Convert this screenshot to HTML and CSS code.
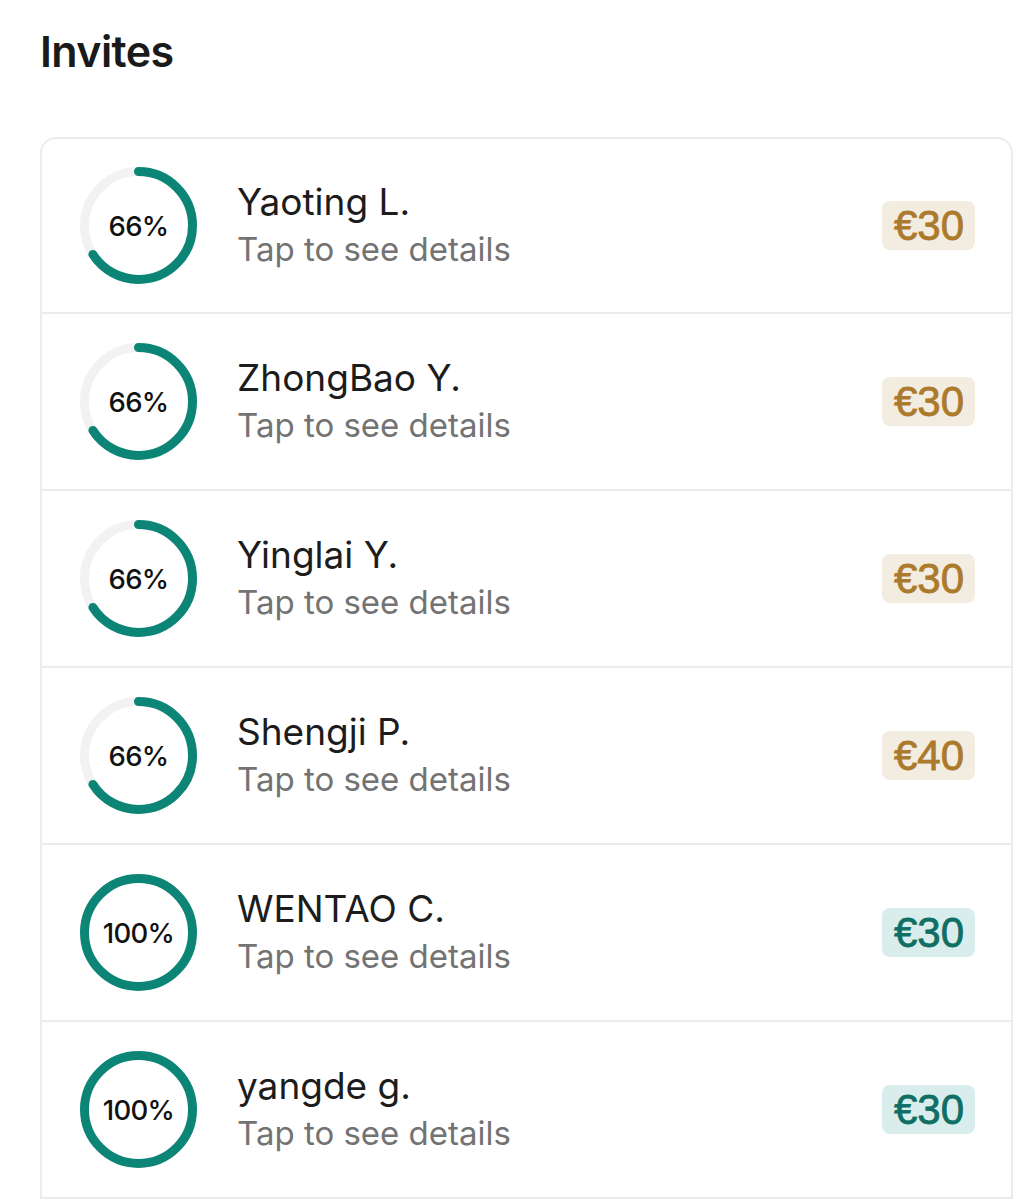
FILE: index.html
```html
<!DOCTYPE html>
<html lang="en">
<head>
<meta charset="utf-8">
<title>Invites</title>
<link rel="stylesheet" href="styles.css">
</head>
<body>
<main class="page">
  <h1 class="title">Invites</h1>
  <section class="card">
    <div class="row">
      <div class="ring">
        <svg viewBox="0 0 117 117" width="117" height="117"><circle class="track" cx="58.5" cy="58.5" r="54"/><circle class="arc" cx="58.5" cy="58.5" r="54" pathLength="100" stroke-dasharray="66 100" transform="rotate(-90 58.5 58.5)"/></svg>
        <span class="pct">66%</span>
      </div>
      <div class="info"><div class="name">Yaoting L.</div><div class="sub">Tap to see details</div></div>
      <span class="badge pending">€30</span>
    </div>
    <div class="row">
      <div class="ring">
        <svg viewBox="0 0 117 117" width="117" height="117"><circle class="track" cx="58.5" cy="58.5" r="54"/><circle class="arc" cx="58.5" cy="58.5" r="54" pathLength="100" stroke-dasharray="66 100" transform="rotate(-90 58.5 58.5)"/></svg>
        <span class="pct">66%</span>
      </div>
      <div class="info"><div class="name">ZhongBao Y.</div><div class="sub">Tap to see details</div></div>
      <span class="badge pending">€30</span>
    </div>
    <div class="row">
      <div class="ring">
        <svg viewBox="0 0 117 117" width="117" height="117"><circle class="track" cx="58.5" cy="58.5" r="54"/><circle class="arc" cx="58.5" cy="58.5" r="54" pathLength="100" stroke-dasharray="66 100" transform="rotate(-90 58.5 58.5)"/></svg>
        <span class="pct">66%</span>
      </div>
      <div class="info"><div class="name">Yinglai Y.</div><div class="sub">Tap to see details</div></div>
      <span class="badge pending">€30</span>
    </div>
    <div class="row">
      <div class="ring">
        <svg viewBox="0 0 117 117" width="117" height="117"><circle class="track" cx="58.5" cy="58.5" r="54"/><circle class="arc" cx="58.5" cy="58.5" r="54" pathLength="100" stroke-dasharray="66 100" transform="rotate(-90 58.5 58.5)"/></svg>
        <span class="pct">66%</span>
      </div>
      <div class="info"><div class="name">Shengji P.</div><div class="sub">Tap to see details</div></div>
      <span class="badge pending">€40</span>
    </div>
    <div class="row">
      <div class="ring">
        <svg viewBox="0 0 117 117" width="117" height="117"><circle class="arc full" cx="58.5" cy="58.5" r="54"/></svg>
        <span class="pct">100%</span>
      </div>
      <div class="info"><div class="name">WENTAO C.</div><div class="sub">Tap to see details</div></div>
      <span class="badge done">€30</span>
    </div>
    <div class="row">
      <div class="ring">
        <svg viewBox="0 0 117 117" width="117" height="117"><circle class="arc full" cx="58.5" cy="58.5" r="54"/></svg>
        <span class="pct">100%</span>
      </div>
      <div class="info"><div class="name">yangde g.</div><div class="sub">Tap to see details</div></div>
      <span class="badge done">€30</span>
    </div>
  </section>
</main>
</body>
</html>
```
FILE: styles.css
```css
html, body {
  margin: 0;
  padding: 0;
  background: #ffffff;
}
body {
  font-family: Inter, "Noto Sans", "Liberation Sans", sans-serif;
  color: #1a1a1a;
}
.page {
  padding: 0 10px 0 40px;
}
.title {
  margin: 0;
  padding-top: 24px;
  height: 137px;
  box-sizing: border-box;
  font-size: 43px;
  font-weight: 600;
  letter-spacing: -0.6px;
  line-height: 54px;
  color: #1a1a1a;
}
.card {
  border: 2px solid #ececec;
  border-bottom: none;
  border-radius: 16px 16px 0 0;
}
.row {
  display: flex;
  align-items: center;
  height: 175px;
  padding: 0 36px 0 38px;
  border-bottom: 2px solid #ececec;
}
.card .row:first-child {
  height: 173px;
}
.ring {
  position: relative;
  width: 117px;
  height: 117px;
  flex: none;
}
.ring svg {
  display: block;
}
.track {
  fill: none;
  stroke: #f2f2f2;
  stroke-width: 9;
}
.arc {
  fill: none;
  stroke: #0c8577;
  stroke-width: 9;
  stroke-linecap: round;
}
.pct {
  position: absolute;
  inset: 0;
  display: flex;
  align-items: center;
  justify-content: center;
  font-size: 27.5px;
  font-weight: 500;
  letter-spacing: -0.7px;
  color: #111111;
}
.info {
  flex: 1;
  margin-left: 40px;
}
.name {
  font-size: 37px;
  line-height: 47px;
  color: #1c1c1c;
}
.sub {
  font-size: 33px;
  line-height: 49px;
  color: #737373;
}
.badge {
  font-family: "Liberation Sans", Arial, sans-serif;
  font-size: 42px;
  font-weight: 400;
  -webkit-text-stroke: 0.8px currentColor;
  line-height: 49px;
  padding: 0 11px 0 12px;
  border-radius: 8px;
}
.badge.pending {
  background: #f3ece1;
  color: #ab7a2b;
}
.badge.done {
  background: #d9eeec;
  color: #0f6f64;
}
```
